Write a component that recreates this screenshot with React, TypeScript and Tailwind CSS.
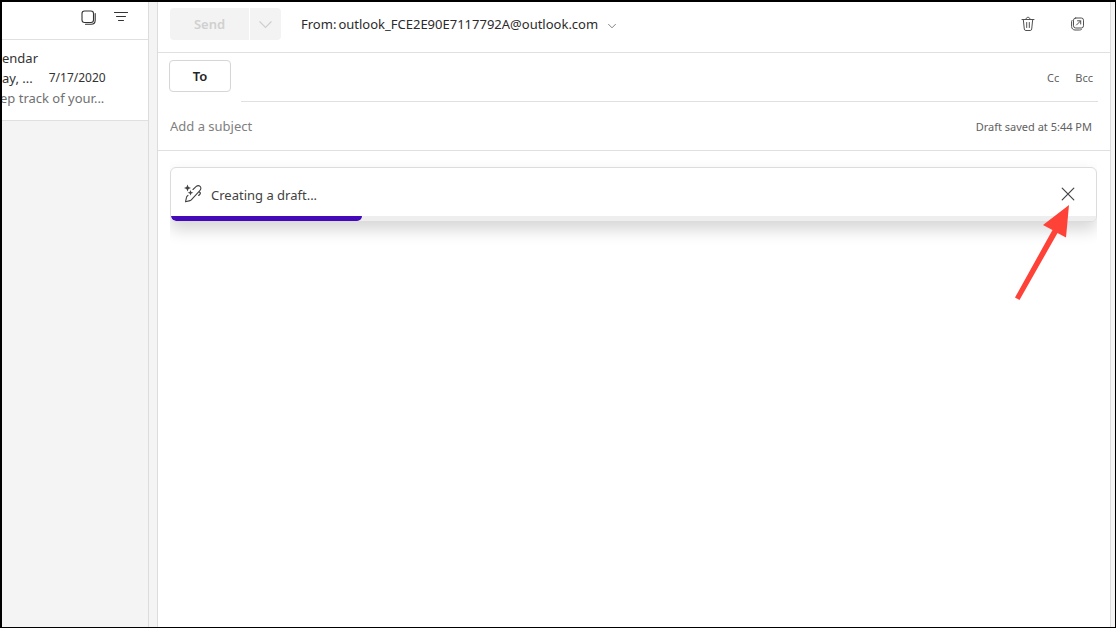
import React, { useState } from 'react';

const TrashIcon = () => (
  <svg width="14" height="16" viewBox="0 0 14 16" fill="none" stroke="#505050" strokeWidth="1" strokeLinecap="round">
    <path d="M1 3.500h12M5 3.300C5 2.100 5.800 1.300 7 1.300S9 2.100 9 3.300M2.300 3.500l1 9.600c.1.900.7 1.400 1.600 1.400h4.200c.9 0 1.500-.5 1.600-1.400l1-9.600M5.700 6.500v5M8.300 6.500v5" />
  </svg>
);

const PopOutIcon = () => (
  <svg width="14" height="14" viewBox="0 0 14 14" fill="none" stroke="#505050" strokeWidth="1" strokeLinecap="round" strokeLinejoin="round">
    <rect x="2.500" y="1" width="10" height="10" rx="2.200" />
    <path d="M1 3.500C.7 4 .6 4.500.6 5v4.500c0 2 1.400 3.500 3.400 3.500h4.500c.8 0 1.500-.2 2-.6M5.500 8l4-4M6.500 3.800h3.200V7" />
  </svg>
);

const SelectIcon = () => (
  <svg width="15" height="15" viewBox="0 0 15 15" fill="none" stroke="#333" strokeWidth="1.100" strokeLinecap="round">
    <rect x="1" y="1" width="11.500" height="11.500" rx="2.500" />
    <path d="M14.200 3.500v6.700c0 2.300-1.700 4-4 4H4.500" />
  </svg>
);

const FilterIcon = () => (
  <svg width="14" height="10" viewBox="0 0 14 10" stroke="#333" strokeWidth="1.100" strokeLinecap="round">
    <path d="M.5.500h13M2.500 4.500h9M4.500 8.500h5" />
  </svg>
);

const ChevronIcon = ({ size, color }: { size: number; color: string }) => (
  <svg width={size} height={size} viewBox="0 0 12 12" fill="none" stroke={color} strokeWidth="1.100" strokeLinecap="round">
    <path d="M.8 3.500 6 8.700l5.200-5.200" />
  </svg>
);

const MagicPenIcon = () => (
  <svg width="18" height="20" viewBox="0 0 18 20" fill="none" stroke="#424242" strokeWidth="1.100" strokeLinejoin="round" strokeLinecap="round">
    <path d="M3.500.5 4.500 2.900 7 4 4.500 5.100 3.500 7.500 2.500 5.100 0 4l2.500-1.100z" fill="#424242" stroke="none" />
    <path d="m6.500 6 .8 2 2 .8-2 .8-.8 2-.8-2-2-.8 2-.8z" fill="#424242" stroke="none" />
    <path d="M9 5.500 12 2.700c1.300-1.200 3-1.300 4.100-.3s1 2.900-.3 4.200l-8.500 9.300c-.4.400-.8.600-1.300.7l-4.500 1.200 1-4.400c.1-.5.400-.9.700-1.300l.8-.8M15 7.700l1 .8c.5.500.5 1 .1 1.500l-1.400 1.500" />
  </svg>
);

const CloseIcon = () => (
  <svg width="14" height="14" viewBox="0 0 14 14" stroke="#424242" strokeWidth="1.200" strokeLinecap="round">
    <path d="m1.200 1.200 11.600 11.600M12.800 1.200 1.200 12.800" />
  </svg>
);

const PointerArrow = () => (
  <svg width="56" height="98" viewBox="0 0 56 98" className="pointer-events-none absolute top-6 right-3">
    <path d="M54 2 51 34.500 42.500 30 4.500 97 0 94.500 37.500 27 28 22z" fill="#ff4238" />
  </svg>
);

const MessageList: React.FC = () => (
  <aside className="w-[147px] shrink-0 border-r border-[#dcdcdc] bg-[#f4f4f4]">
    <div className="flex h-[38px] items-start justify-end gap-[18px] border-b border-[#e0e0e0] bg-white pt-2 pr-5">
      <button aria-label="Select"><SelectIcon /></button>
      <button aria-label="Filter" className="py-0.5"><FilterIcon /></button>
    </div>
    <article className="h-[81px] overflow-hidden border-b border-[#e0e0e0] bg-white pt-2 text-[13px] leading-5 whitespace-nowrap text-[#333]">
      <div>endar</div>
      <div className="flex gap-4">
        <span>ay, ...</span>
        <time className="text-xs leading-5">7/17/2020</time>
      </div>
      <div className="-ml-0.5 text-[#707070]">ep track of your...</div>
    </article>
  </aside>
);

const DraftBanner: React.FC = () => {
  const progress = 191 / 926;

  return (
    <div className="relative overflow-x-clip pb-8">
      <div role="status" className="rounded-md border border-[#dcdcdc] bg-white shadow-[0_8px_16px_rgba(0,0,0,0.16)]">
        <div className="flex h-12 items-center gap-2 px-[13px] pt-1">
          <MagicPenIcon />
          <span className="grow pt-1 pl-px text-[13px] text-[#424242]">Creating a draft...</span>
          <button aria-label="Cancel draft" className="relative p-2">
            <CloseIcon />
            <PointerArrow />
          </button>
        </div>
        <div className="h-[5px] overflow-hidden rounded-b-md bg-[#eee]">
          <div className="h-full rounded-b-md bg-[#4409b9]" style={{ width: `${progress * 100}%` }} />
        </div>
      </div>
    </div>
  );
};

const Compose: React.FC = () => {
  const [recipients, setRecipients] = useState('');
  const [subject, setSubject] = useState('');

  return (
    <main className="min-w-0 grow border-x border-[#dcdcdc] bg-white text-[13px]">
      <header className="flex h-[51px] items-start border-b border-[#e0e0e0] pt-1.5 pr-[25px] pl-3">
        <div className="flex h-8 gap-px">
          <button disabled className="w-[79px] rounded-l bg-[#f3f3f3] pt-px font-semibold text-[#d0d0d0]">Send</button>
          <button disabled aria-label="Send options" className="flex w-[31px] items-center justify-center rounded-r bg-[#f3f3f3]">
            <ChevronIcon size={13} color="#cfcfcf" />
          </button>
        </div>
        <button className="ml-5 flex h-8 items-center gap-0.5 pt-0.5 text-[#2b2b2b]">
          <span>From:</span>
          <span>outlook_FCE2E90E7117792A@outlook.com</span>
          <span className="pt-0.5 pl-2"><ChevronIcon size={8} color="#555" /></span>
        </button>
        <div className="ml-auto flex h-8 items-center gap-9">
          <button aria-label="Discard"><TrashIcon /></button>
          <button aria-label="Open in new window"><PopOutIcon /></button>
        </div>
      </header>

      <div className="flex h-[49px] items-stretch gap-2.5 pr-3 pl-[11px]">
        <button className="mt-[7px] h-8 w-[62px] rounded border border-[#d6d6d6] pt-px font-semibold text-[#242424]">To</button>
        <div className="flex grow items-center gap-4 border-b border-[#e0e0e0] pt-0.5 pr-[5px] text-[11px] text-[#616161]">
          <input
            aria-label="To"
            value={recipients}
            onChange={(e) => setRecipients(e.target.value)}
            className="min-w-0 grow text-[13px] outline-none"
          />
          <button>Cc</button>
          <button>Bcc</button>
        </div>
      </div>

      <div className="flex h-[49px] items-center border-b border-[#e0e0e0] pt-0.5 pr-[18px] pl-3">
        <input
          aria-label="Subject"
          placeholder="Add a subject"
          value={subject}
          onChange={(e) => setSubject(e.target.value)}
          className="min-w-0 grow text-[13px] outline-none placeholder:text-[#808080]"
        />
        <span className="text-[11px] text-[#616161]">Draft saved at 5:44 PM</span>
      </div>

      <section className="pt-4 pr-[13px] pl-3">
        <DraftBanner />
      </section>
    </main>
  );
};

export default function App() {
  return (
    <div className="flex min-h-screen border-t-2 border-r border-b border-l-2 border-black bg-[#f4f4f4] pr-1 font-['Noto_Sans','Open_Sans',sans-serif]">
      <MessageList />
      <div className="w-2 shrink-0" />
      <Compose />
    </div>
  );
}
